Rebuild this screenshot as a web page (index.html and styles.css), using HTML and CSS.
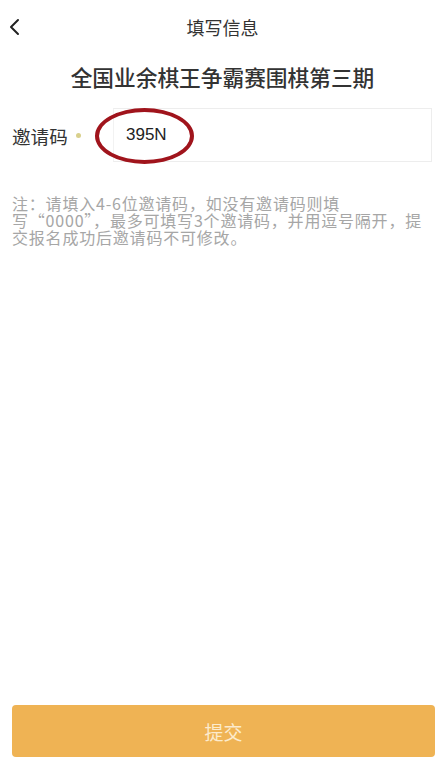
FILE: index.html
```html
<!DOCTYPE html>
<html lang="zh-CN">
<head>
<meta charset="utf-8">
<title>填写信息</title>
<link rel="stylesheet" href="styles.css">
</head>
<body>
<div class="page">
  <header class="nav">
    <span class="back">
      <svg width="12" height="18" viewBox="0 0 12 18"><path d="M10 2 L3 9 L10 16" fill="none" stroke="#222" stroke-width="2" stroke-linecap="round" stroke-linejoin="round"/></svg>
    </span>
    <h1 class="nav-title">填写信息</h1>
  </header>
  <main class="content">
    <h2 class="heading">全国业余棋王争霸赛围棋第三期</h2>
    <div class="field">
      <label class="label">邀请码</label>
      <span class="star"></span>
      <div class="input">
        <span class="value">395N</span>
        <span class="circle"></span>
      </div>
    </div>
    <p class="note">注：请填入4-6位邀请码，如没有邀请码则填<br>写“0000”，最多可填写3个邀请码，并用逗号隔开，提<br>交报名成功后邀请码不可修改。</p>
  </main>
  <footer class="footer">
    <button class="submit">提交</button>
  </footer>
</div>
</body>
</html>
```
FILE: styles.css
```css
* { box-sizing: border-box; }
html, body { margin: 0; padding: 0; background: #fff; }
body {
  font-family: "Noto Sans CJK SC", "Noto Sans", "Liberation Sans", sans-serif;
  color: #333;
}
.page {
  width: 445px;
  height: 760px;
  display: flex;
  flex-direction: column;
}
.nav {
  height: 54px;
  display: flex;
  align-items: center;
  justify-content: center;
  position: relative;
}
.back {
  position: absolute;
  left: 8px;
  top: 18px;
  display: flex;
}
.nav-title {
  margin: 0;
  font-size: 18px;
  font-weight: 400;
  color: #333;
}
.content {
  flex: 1;
  padding: 0 12px;
}
.heading {
  margin: 7px 0 0;
  text-align: center;
  font-size: 21.7px;
  font-weight: 500;
  line-height: 32px;
  color: #333;
}
.field {
  margin-top: 15px;
  display: flex;
  align-items: center;
  height: 54px;
}
.label {
  font-size: 18.6px;
  color: #333;
  width: 62px;
}
.star {
  width: 5px;
  height: 5px;
  border-radius: 50%;
  background: #d9d08c;
  margin-left: 2px;
}
.input {
  margin-left: 32px;
  flex: 1;
  height: 54px;
  margin-right: 1px;
  border: 1px solid #ededed;
  border-left-color: #f2f2f2;
  display: flex;
  align-items: center;
  position: relative;
}
.value {
  margin-left: 12px;
  font-family: "Liberation Sans", sans-serif;
  font-size: 17px;
  color: #222;
}
.circle {
  position: absolute;
  left: -19px;
  top: -1px;
  width: 99px;
  height: 56px;
  border: 4px solid #a0141c;
  border-radius: 50%;
}
.note {
  margin: 33px 0 0;
  font-size: 16px;
  line-height: 17px;
  letter-spacing: 0.8px;
  color: #a6a6a6;
  white-space: nowrap;
}
.footer {
  padding: 0 10px 3px 12px;
}
.submit {
  width: 100%;
  height: 52px;
  border: none;
  border-radius: 4px;
  background: #efb354;
  color: #fcebcd;
  font-family: "Noto Sans CJK SC", sans-serif;
  font-size: 19px;
  display: flex;
  align-items: center;
  justify-content: center;
}
```
